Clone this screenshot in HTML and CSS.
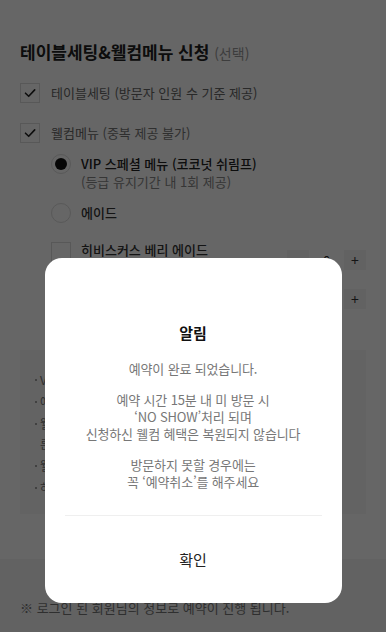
FILE: index.html
```html
<!DOCTYPE html>
<html lang="ko">
<head>
<meta charset="utf-8">
<title>테이블세팅&웰컴메뉴 신청</title>
<link rel="stylesheet" href="styles.css">
</head>
<body>
<div class="page">
  <section class="apply">
    <h2 class="title">테이블세팅&amp;웰컴메뉴 신청 <span class="opt">(선택)</span></h2>

    <div class="row check-row">
      <span class="box checked"><svg viewBox="0 0 20 20" width="20" height="20"><path d="M5.5 10.2l3.2 3.1 6-6.4" fill="none" stroke="#222" stroke-width="1.6" stroke-linecap="round" stroke-linejoin="round"/></svg></span>
      <span class="label">테이블세팅 (방문자 인원 수 기준 제공)</span>
    </div>

    <div class="row check-row second">
      <span class="box checked"><svg viewBox="0 0 20 20" width="20" height="20"><path d="M5.5 10.2l3.2 3.1 6-6.4" fill="none" stroke="#222" stroke-width="1.6" stroke-linecap="round" stroke-linejoin="round"/></svg></span>
      <span class="label">웰컴메뉴 <span class="sub">(중복 제공 불가)</span></span>
    </div>

    <div class="options">
      <div class="row opt-row vip">
        <span class="radio on"></span>
        <div class="opt-text">
          <div class="opt-name strong">VIP 스페셜 메뉴 (코코넛 쉬림프)</div>
          <div class="opt-desc">(등급 유지기간 내 1회 제공)</div>
        </div>
      </div>
      <div class="row opt-row ade">
        <span class="radio"></span>
        <div class="opt-text"><div class="opt-name">에이드</div></div>
      </div>
      <div class="item">
        <span class="box small"></span>
        <div class="opt-text">
          <div class="opt-name">히비스커스 베리 에이드</div>
          <div class="opt-desc">(1잔 제공)</div>
        </div>
        <div class="stepper">
          <span class="step">−</span><span class="count">0</span><span class="step">+</span>
        </div>
      </div>
      <div class="item">
        <span class="box small"></span>
        <div class="opt-text">
          <div class="opt-name">패션후르츠 에이드</div>
          <div class="opt-desc">(1잔 제공)</div>
        </div>
        <div class="stepper">
          <span class="step">−</span><span class="count">0</span><span class="step">+</span>
        </div>
      </div>
    </div>

    <ul class="notice-box">
      <li>VIP 스페셜 메뉴는 등급 유지기간 내 1회 제공됩니다.</li>
      <li>에이드는 방문자 인원 수만큼 선택 가능합니다.</li>
      <li>웰컴메뉴는 예약 당일 매장 사정에 따라 변경될 수 있으며 다른 메뉴로 대체됩니다.</li>
      <li>웰컴메뉴는 다른 쿠폰과 중복 사용이 불가합니다.</li>
      <li>하루 전까지 예약 변경이 가능합니다.</li>
    </ul>
  </section>

  <footer class="foot">
    <p class="foot-note">※ 로그인 된 회원님의 정보로 예약이 진행 됩니다.</p>
  </footer>
</div>

<div class="dim">
  <div class="modal">
    <h3 class="modal-title">알림</h3>
    <div class="modal-body">
      <p>예약이 완료 되었습니다.</p>
      <p>예약 시간 15분 내 미 방문 시<br>‘NO SHOW’처리 되며<br>신청하신 웰컴 혜택은 복원되지 않습니다</p>
      <p>방문하지 못할 경우에는<br>꼭 ‘예약취소’를 해주세요</p>
    </div>
    <div class="modal-foot">
      <button class="ok" type="button">확인</button>
    </div>
  </div>
</div>
</body>
</html>
```

FILE: styles.css
```css
* { box-sizing: border-box; }

html, body {
  margin: 0;
  padding: 0;
  background: #fff;
}

body {
  font-family: "Noto Sans CJK KR", "Noto Sans", sans-serif;
  color: #222;
  letter-spacing: 0;
}

.page {
  width: 386px;
  min-height: 700px;
}

.apply {
  padding: 40px 20px 0;
}

.title {
  margin: 0;
  font-size: 17px;
  line-height: 24px;
  font-weight: 700;
  color: #222;
  letter-spacing: 0;
}

.title .opt {
  font-size: 14px;
  font-weight: 400;
  color: #999;
}

.row {
  display: flex;
  align-items: center;
}

.check-row {
  margin-top: 18px;
  height: 20px;
  gap: 11px;
}

.check-row.second {
  margin-top: 20px;
}

.box {
  width: 20px;
  height: 20px;
  flex: none;
  border: 1px solid #ddd;
  background: #fff;
  display: flex;
  align-items: center;
  justify-content: center;
}

.box svg {
  display: block;
  margin: -1px;
}

.label {
  font-size: 13px;
  line-height: 20px;
  color: #666;
}

.label .sub {
  color: #777;
}

.options {
  padding-left: 31px;
}

.opt-row {
  gap: 10px;
  align-items: flex-start;
}

.vip {
  margin-top: 12px;
}

.ade {
  margin-top: 12px;
  align-items: center;
}

.radio {
  width: 20px;
  height: 20px;
  flex: none;
  border-radius: 50%;
  border: 1px solid #ddd;
  background: #fff;
  display: flex;
  align-items: center;
  justify-content: center;
}

.radio.on::after {
  content: "";
  width: 12px;
  height: 12px;
  border-radius: 50%;
  background: #111;
}

.vip .radio {
  margin-top: -1px;
}

.opt-name {
  font-size: 13px;
  line-height: 18px;
  color: #333;
}

.opt-name.strong {
  font-weight: 500;
  color: #222;
}

.ade .opt-name {
  line-height: 20px;
  font-weight: 500;
}

.opt-desc {
  font-size: 13px;
  line-height: 18px;
  color: #888;
}

.item {
  display: flex;
  align-items: flex-start;
  gap: 10px;
  margin-top: 18px;
}

.item + .item {
  margin-top: 3px;
}

.item .box {
  margin-top: 1px;
}

.item .opt-name {
  font-weight: 500;
}

.stepper {
  margin-left: auto;
  margin-top: 9px;
  display: flex;
  align-items: center;
}

.step {
  width: 22px;
  height: 20px;
  background: #f6f6f6;
  display: flex;
  align-items: center;
  justify-content: center;
  font-size: 14px;
  color: #333;
}

.count {
  width: 35px;
  text-align: center;
  font-size: 13px;
  color: #222;
}

.notice-box {
  list-style: none;
  margin: 34px 0 0;
  padding: 20px 30px 17px 15px;
  background: #f7f7f7;
}

.notice-box li {
  position: relative;
  padding-left: 5px;
  font-size: 12px;
  line-height: 19.5px;
  color: #777;
}

.notice-box li + li {
  margin-top: 2.5px;
}

.notice-box li::before {
  content: "";
  position: absolute;
  left: 0;
  top: 9px;
  width: 2px;
  height: 2px;
  border-radius: 50%;
  background: #888;
}

.foot {
  margin-top: 45px;
  background: #f4f4f4;
  padding: 40px 20px 40px;
}

.foot-note {
  margin: 0;
  font-size: 13px;
  line-height: 18px;
  color: #777;
}

/* modal */
.dim {
  position: fixed;
  inset: 0;
  background: rgba(0, 0, 0, 0.6);
  display: flex;
  align-items: flex-end;
  justify-content: center;
  padding-bottom: 29px;
}

.modal {
  width: 297px;
  background: #fff;
  border-radius: 17px;
  padding-top: 64px;
  display: flex;
  flex-direction: column;
  align-items: stretch;
}

.modal-title {
  margin: 0;
  text-align: center;
  font-size: 15px;
  line-height: 22px;
  font-weight: 700;
  color: #111;
}

.modal-body {
  margin: 16px 20px 0;
  padding-bottom: 25px;
  border-bottom: 1px solid #efefef;
  display: flex;
  flex-direction: column;
  gap: 14px;
}

.modal-body p {
  margin: 0;
  text-align: center;
  font-size: 13px;
  line-height: 17px;
  color: #777;
  letter-spacing: -0.15px;
}

.modal-foot {
  height: 87px;
  display: flex;
  align-items: center;
  justify-content: center;
}

.ok {
  border: 0;
  background: none;
  padding: 0;
  font-family: inherit;
  font-size: 15px;
  line-height: 22px;
  color: #222;
  cursor: pointer;
}
```
